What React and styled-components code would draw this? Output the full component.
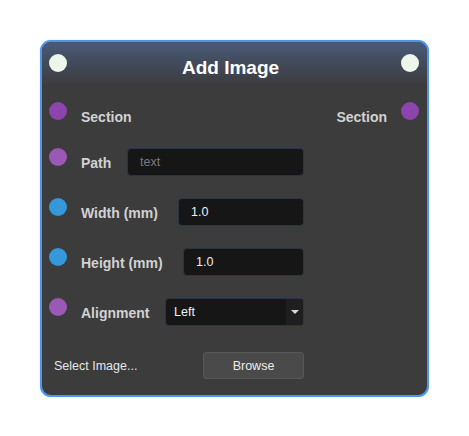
import React from 'react';
import styled, {createGlobalStyle} from 'styled-components';

const GlobalStyle = createGlobalStyle`
    html, body {
        margin: 0;
        padding: 0;
        background: #ffffff;
        font-family: "Liberation Sans", Arial, sans-serif;
    }
`;

const Page = styled.div`
    width: 469px;
    height: 436px;
    padding: 40px 0 0 40px;
    box-sizing: border-box;
`;

const Card = styled.div`
    width: 389px;
    height: 357px;
    box-sizing: border-box;
    border: 2px solid #4c97ec;
    border-radius: 11px;
    background: #3c3c3c;
    box-shadow: 0 0 1px 0 rgba(76, 151, 236, 0.6);
    overflow: hidden;
    display: flex;
    flex-direction: column;
`;

const Header = styled.div`
    height: 44px;
    box-sizing: border-box;
    padding: 12px 8px 0 7px;
    display: flex;
    align-items: flex-start;
    background: linear-gradient(to bottom, #4a5b78 0%, #414857 55%, #3c3c3c 100%);
`;

const Title = styled.div`
    flex: 1;
    text-align: center;
    color: #ffffff;
    font-weight: bold;
    font-size: 19px;
    line-height: 30px;
    margin-top: -1px;
    margin-right: 7px;
`;

const Socket = styled.span`
    flex: none;
    width: 18px;
    height: 18px;
    border-radius: 50%;
    background: ${p => p.color};
`;

const Body = styled.div`
    flex: 1;
    padding: 16px 8px 0 7px;
    display: flex;
    flex-direction: column;
`;

const Row = styled.div`
    display: flex;
    align-items: flex-start;
    margin-bottom: ${p => p.gap}px;
`;

const Content = styled.div`
    flex: 1;
    height: 28px;
    display: flex;
    align-items: center;
    margin-left: 14px;
    margin-right: ${p => p.right || 0}px;
`;

const Label = styled.span`
    color: #d2d2d2;
    font-weight: bold;
    font-size: 14px;
    margin-top: 1px;
`;

const RightLabel = styled(Label)`
    margin-left: auto;
`;

const Field = styled.div`
    margin-left: auto;
    width: ${p => p.width}px;
    height: 28px;
    box-sizing: border-box;
    border: 1px solid #2a3545;
    border-radius: 4px;
    background: #161616;
    display: flex;
    align-items: center;
    padding-left: ${p => p.pad || 12}px;
    font-size: 12.5px;
    color: ${p => (p.placeholder ? '#7a7a7a' : '#f0f0f0')};
`;

const Select = styled(Field)`
    padding-left: 8px;
    padding-right: 0;
    overflow: hidden;
`;

const SelectText = styled.span`
    flex: 1;
`;

const Arrow = styled.span`
    width: 17px;
    height: 100%;
    background: #1f1f1f;
    display: flex;
    align-items: center;
    justify-content: center;
    &::after{
        content: '';
        border-left: 4px solid transparent;
        border-right: 4px solid transparent;
        border-top: 4px solid #d8d8d8;
    }
`;

const Footer = styled.div`
    display: flex;
    align-items: center;
    height: 27px;
    margin-top: 26px;
    padding-left: 5px;
    margin-right: 115px;
`;

const FooterText = styled.span`
    flex: 1;
    color: #e6e6e6;
    font-size: 12.5px;
`;

const Button = styled.div`
    width: 101px;
    height: 27px;
    box-sizing: border-box;
    border: 1px solid #575757;
    border-radius: 3px;
    background: #4a4a4a;
    color: #ececec;
    font-size: 12.5px;
    display: flex;
    align-items: center;
    justify-content: center;
`;

const PURPLE = '#8e44ad';
const VIOLET = '#9b59b6';
const BLUE = '#3498db';
const WHITE = '#eef6ec';

const rows = [
    {label: 'Path', color: VIOLET, width: 177, value: 'text', placeholder: true},
    {label: 'Width (mm)', color: BLUE, width: 126, value: '1.0'},
    {label: 'Height (mm)', color: BLUE, width: 121, value: '1.0'},
];

export default function App() {
    return <Page>
        <GlobalStyle/>
        <Card>
            <Header>
                <Socket color={WHITE}/>
                <Title>Add Image</Title>
                <Socket color={WHITE}/>
            </Header>
            <Body>
                <Row gap={18}>
                    <Socket color={PURPLE}/>
                    <Content right={14}>
                        <Label>Section</Label>
                        <RightLabel>Section</RightLabel>
                    </Content>
                    <Socket color={PURPLE}/>
                </Row>
                {
                    rows.map((val, index) => {
                        return <Row key={index} gap={22}>
                            <Socket color={val.color}/>
                            <Content right={115}>
                                <Label>{val.label}</Label>
                                <Field width={val.width} placeholder={val.placeholder}>{val.value}</Field>
                            </Content>
                        </Row>
                    })
                }
                <Row gap={0}>
                    <Socket color={VIOLET}/>
                    <Content right={115}>
                        <Label>Alignment</Label>
                        <Select width={139}>
                            <SelectText>Left</SelectText>
                            <Arrow/>
                        </Select>
                    </Content>
                </Row>
                <Footer>
                    <FooterText>Select Image...</FooterText>
                    <Button>Browse</Button>
                </Footer>
            </Body>
        </Card>
    </Page>
}
